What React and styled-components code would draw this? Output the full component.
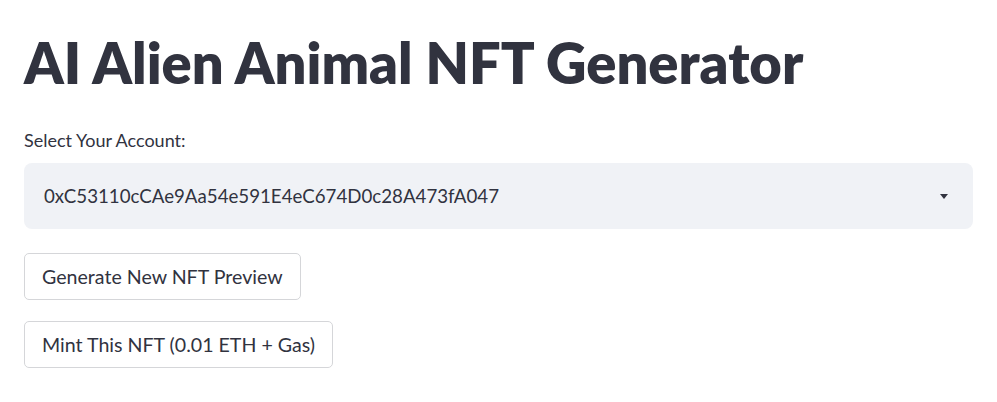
import React from "react";
import styled, { createGlobalStyle } from "styled-components";

const GlobalStyle = createGlobalStyle`
  body {
    margin: 0;
    background: #ffffff;
    font-family: Lato, "Open Sans", sans-serif;
    color: #31333f;
  }
`;

const Page = styled.div`
  display: flex;
  flex-direction: column;
  padding: 28px 24px 0 24px;
`;

const Title = styled.h1`
  margin: 0;
  font-size: 56px;
  font-weight: 800;
  line-height: 70px;
  color: #31333f;
`;

const Label = styled.label`
  margin-top: 31px;
  font-size: 18px;
  line-height: 22px;
`;

const SelectBox = styled.div`
  margin-top: 12px;
  height: 66px;
  display: flex;
  align-items: center;
  justify-content: space-between;
  padding: 0 25px 0 20px;
  background: #f0f2f6;
  border-radius: 8px;
  font-size: 18.7px;
`;

const Caret = styled.span`
  width: 0;
  height: 0;
  border-left: 4.5px solid transparent;
  border-right: 4.5px solid transparent;
  border-top: 5px solid #31333f;
`;

const Button = styled.button`
  align-self: flex-start;
  margin-top: ${(p) => p.$gap}px;
  height: 47px;
  padding: 0 17px;
  background: #ffffff;
  border: 1px solid #d5d6d9;
  border-radius: 5px;
  font-family: inherit;
  font-size: 19.6px;
  color: #31333f;
`;

export default function App() {
  return (
    <>
      <GlobalStyle />
      <Page>
        <Title>AI Alien Animal NFT Generator</Title>
        <Label>Select Your Account:</Label>
        <SelectBox>
          <span>0xC53110cCAe9Aa54e591E4eC674D0c28A473fA047</span>
          <Caret />
        </SelectBox>
        <Button $gap={24}>Generate New NFT Preview</Button>
        <Button $gap={21}>Mint This NFT (0.01 ETH + Gas)</Button>
      </Page>
    </>
  );
}
